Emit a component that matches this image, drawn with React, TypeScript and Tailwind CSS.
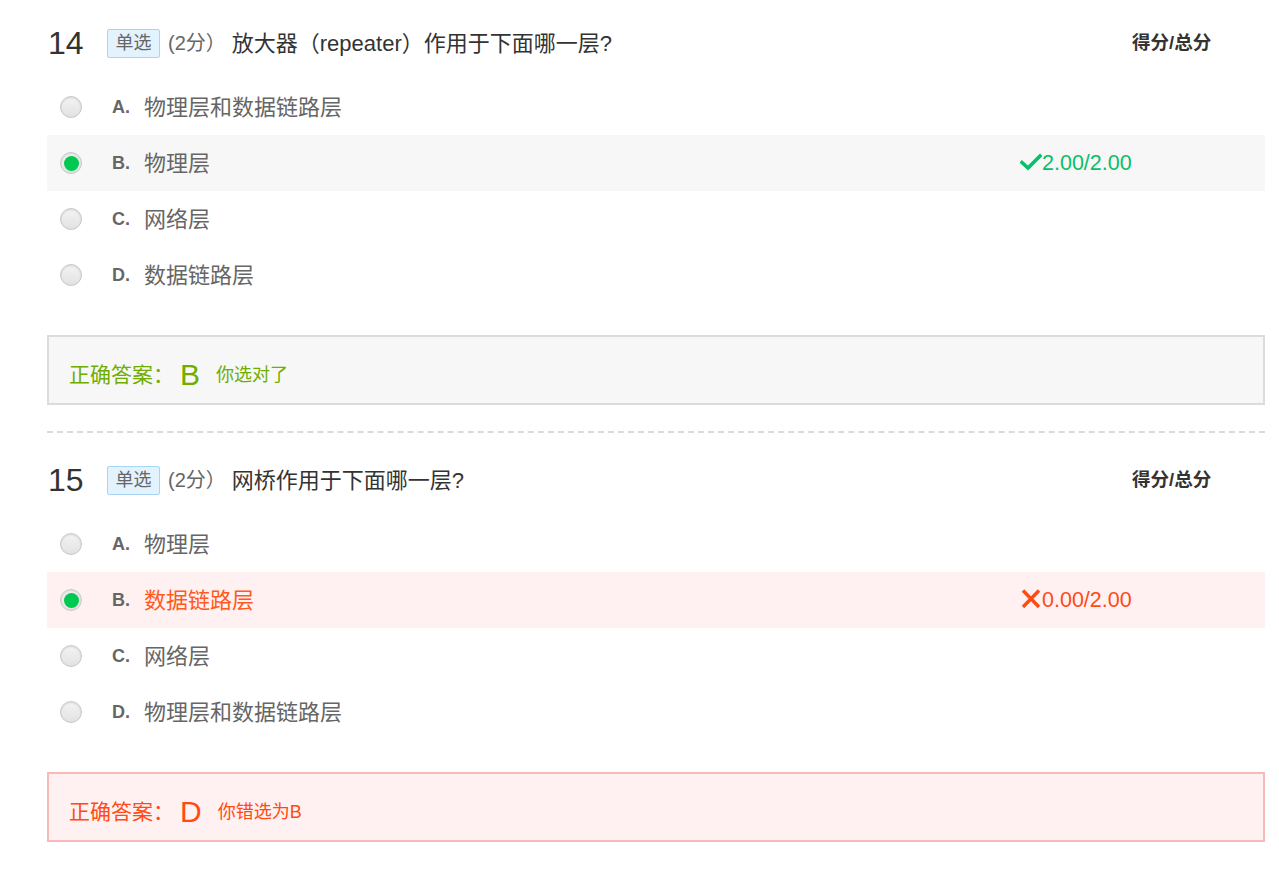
import React from "react"

type Option = { key: string; text: string }

type Question = {
  no: number
  title: string
  options: Option[]
  chosen: string
  answer: string
  score: string
  correct: boolean
}

const questions: Question[] = [
  {
    no: 14,
    title: "放大器（repeater）作用于下面哪一层?",
    options: [
      { key: "A", text: "物理层和数据链路层" },
      { key: "B", text: "物理层" },
      { key: "C", text: "网络层" },
      { key: "D", text: "数据链路层" },
    ],
    chosen: "B",
    answer: "B",
    score: "2.00/2.00",
    correct: true,
  },
  {
    no: 15,
    title: "网桥作用于下面哪一层?",
    options: [
      { key: "A", text: "物理层" },
      { key: "B", text: "数据链路层" },
      { key: "C", text: "网络层" },
      { key: "D", text: "物理层和数据链路层" },
    ],
    chosen: "B",
    answer: "D",
    score: "0.00/2.00",
    correct: false,
  },
]

function Radio({ checked }: { checked: boolean }) {
  return (
    <span className="flex h-[22px] w-[22px] items-center justify-center rounded-full border border-[#c8c8c8] bg-gradient-to-b from-[#f4f4f4] to-[#e2e2e2] shadow-[inset_0_1px_2px_rgba(0,0,0,0.12)]">
      {checked && <span className="h-[15px] w-[15px] rounded-full bg-[#00c851]" />}
    </span>
  )
}

function CheckIcon() {
  return (
    <svg width="22" height="18" viewBox="0 0 22 18" className="mt-[-2px]">
      <path d="M2 9.5 L8 15 L20 3" fill="none" stroke="#07c06b" strokeWidth="3.6" strokeLinecap="square" />
    </svg>
  )
}

function CrossIcon() {
  return (
    <svg width="22" height="20" viewBox="0 0 22 20" className="mt-[-2px]">
      <path d="M3 1.5 L19 18 M19 1.5 L3 18" fill="none" stroke="#ff4b12" strokeWidth="3.4" />
    </svg>
  )
}

function QuestionBlock({ q }: { q: Question }) {
  return (
    <div>
      <div className="flex h-[46px] items-center">
        <span className="w-[60px] text-[32px] leading-none text-[#333] pl-[1px]">{q.no}</span>
        <span className="flex h-[29px] w-[53px] items-center justify-center rounded-[2px] border border-[#a9d5f5] bg-[#e3f3fd] text-[18px] text-[#666]">
          单选
        </span>
        <span className="ml-[8px] text-[20px] text-[#666]">(2分）</span>
        <span className="ml-[6px] text-[22px] text-[#333]">{q.title}</span>
        <span className="ml-auto w-[133px] text-[18.5px] font-bold text-[#333]">得分/总分</span>
      </div>

      <div className="mt-[13px]">
        {q.options.map((o) => {
          const selected = o.key === q.chosen
          const rowBg = selected ? (q.correct ? "bg-[#f7f7f7]" : "bg-[#fff1f1]") : ""
          const textColor = selected && !q.correct ? "text-[#ff5a1c]" : "text-[#666]"
          return (
            <div key={o.key} className={`flex h-[56px] items-center pl-[13px] ${rowBg}`}>
              <Radio checked={selected} />
              <span className="ml-[30px] w-[32px] text-[18px] font-bold text-[#666]">{o.key}.</span>
              <span className={`text-[22px] ${textColor}`}>{o.text}</span>
              {selected && (
                <span
                  className={`ml-auto flex w-[245px] items-center text-[21.5px] ${
                    q.correct ? "text-[#07c06b]" : "text-[#ff4b12]"
                  }`}
                >
                  {q.correct ? <CheckIcon /> : <CrossIcon />}
                  {q.score}
                </span>
              )}
            </div>
          )
        })}
      </div>

      <div
        className={`mt-[32px] flex h-[70px] items-center border-2 px-[20px] pt-[10px] ${
          q.correct
            ? "border-[#dcdcdc] bg-[#f7f7f7] text-[#6fae00]"
            : "border-[#f8b9b9] bg-[#fff1f1] text-[#ff4b12]"
        }`}
      >
        <span className="text-[21px]">正确答案：</span>
        <span className="ml-[6px] text-[30px] leading-none">{q.answer}</span>
        <span className="ml-[16px] text-[18px]">{q.correct ? "你选对了" : `你错选为${q.chosen}`}</span>
      </div>
    </div>
  )
}

export default function App() {
  return (
    <div
      className="min-h-screen w-full bg-white pt-[20px]"
      style={{ fontFamily: '"Liberation Sans", "Noto Sans CJK SC", sans-serif' }}
    >
      <div className="ml-[47px] w-[1218px]">
        <QuestionBlock q={questions[0]} />
        <div className="mt-[26px] mb-[24px] border-t-2 border-dashed border-[#dadada]" />
        <QuestionBlock q={questions[1]} />
      </div>
    </div>
  )
}
